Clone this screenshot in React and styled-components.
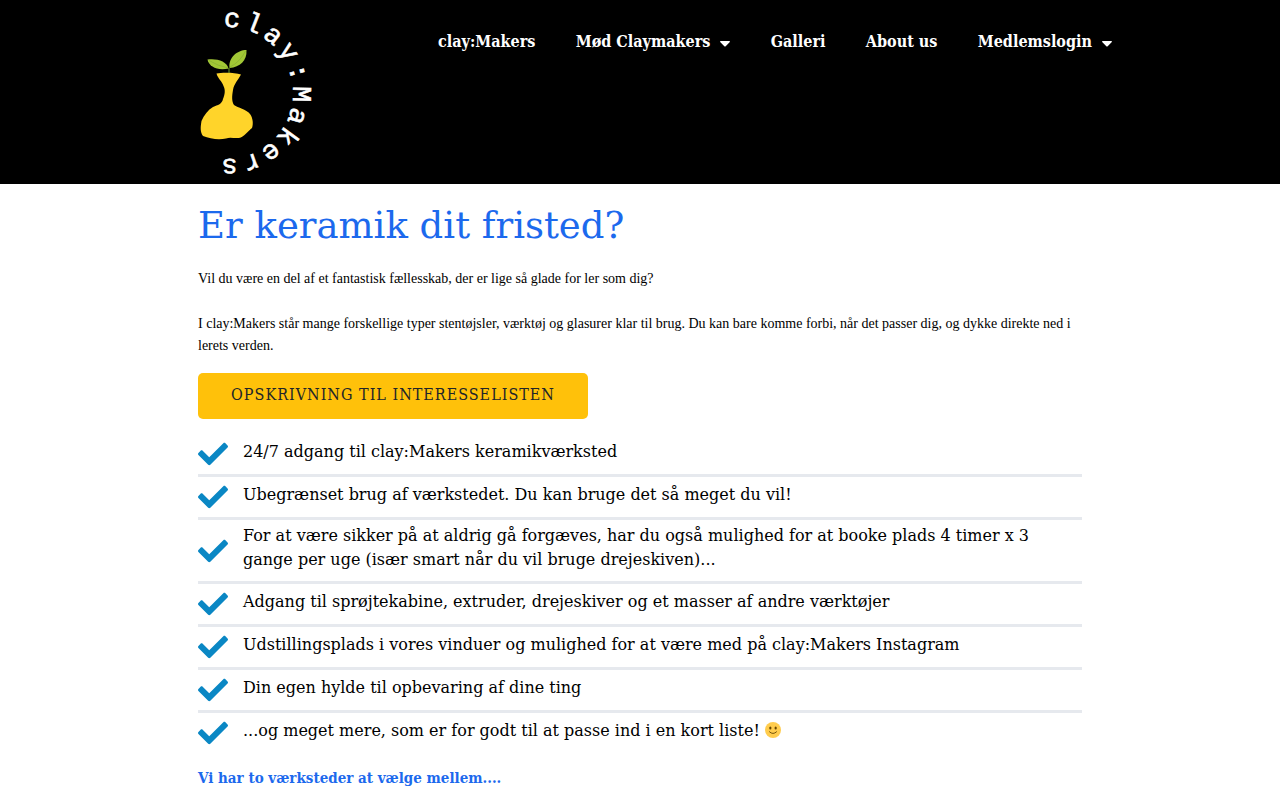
// App.jsx
import React from 'react';
import styled, { createGlobalStyle } from 'styled-components';

const typewriter = '"DejaVu Serif", serif';
const typewriterNarrow = '"DejaVu Serif Condensed", "DejaVu Serif", serif';

const menu = [
  { label: 'clay:Makers' },
  { label: 'Mød Claymakers', sub: true },
  { label: 'Galleri' },
  { label: 'About us' },
  { label: 'Medlemslogin', sub: true },
];

const benefits = [
  '24/7 adgang til clay:Makers keramikværksted',
  'Ubegrænset brug af værkstedet. Du kan bruge det så meget du vil!',
  'For at være sikker på at aldrig gå forgæves, har du også mulighed for at booke plads 4 timer x 3 gange per uge (især smart når du vil bruge drejeskiven)...',
  'Adgang til sprøjtekabine, extruder, drejeskiver og et masser af andre værktøjer',
  'Udstillingsplads i vores vinduer og mulighed for at være med på clay:Makers Instagram',
  'Din egen hylde til opbevaring af dine ting',
];

const Logo = () => (
  <LogoSvg viewBox="0 0 130 184" role="img" aria-label="clay:Makers">
    {/* letters run clockwise round half a circle */}
    {'clay:Makers'.split('').map((letter, i) => (
      <text key={i} x="37" y="27" textAnchor="middle" transform={`rotate(${4 + i * 17.4} 37 93)`}>
        {letter}
      </text>
    ))}
    <path
      fill="#ffd42a"
      d="M26.500 73.500C32 72.500 45 72.500 51 74.500C48 80 44 84 43 90C42 96 41.500 101 44 105C48 108 56 109 60 114C63 118 63.500 124 62 128C58 131 54 137 49 138C44 138.500 40 137 36 138.500C29 140 20 139 13 136C10 132 10.500 127 11.500 121C14 115 18 110 23 107C28 105 32 104 33 99C35 94 35.500 90 33.500 86C32 81 28 79 26.500 73.500Z"
    />
    <path fill="none" stroke="#6f9f2c" d="M39 73V68" />
    <path fill="#a2c736" d="M38.500 68.500C37 61 26 58 17.500 59.500C19 67 28 71 38.500 68.500Z" />
    <path fill="#a2c736" d="M39.500 68C38 58 47 50 56.500 50C57 61 50 67 39.500 68Z" />
    <path fill="none" stroke="#86ad30" strokeWidth="0.7" d="M19 60.500Q28 66 38 68M40 67Q50 62 55.500 51" />
  </LogoSvg>
);

const Check = () => (
  <CheckSvg viewBox="0 0 512 512" aria-hidden="true">
    <path d="M173.898 439.404l-166.4-166.4c-9.997-9.997-9.997-26.206 0-36.204l36.203-36.204c9.997-9.998 26.207-9.998 36.204 0L192 312.690 432.095 72.596c9.997-9.997 26.207-9.997 36.204 0l36.203 36.204c9.997 9.997 9.997 26.206 0 36.204l-294.400 294.401c-9.998 9.997-26.207 9.997-36.204-.001z" />
  </CheckSvg>
);

const Smiley = () => (
  <SmileySvg viewBox="0 0 36 36" role="img" aria-label="smiley">
    <circle fill="#ffcc4d" cx="18" cy="18" r="18" />
    <ellipse fill="#664500" cx="12" cy="13.500" rx="2.500" ry="3.500" />
    <ellipse fill="#664500" cx="24" cy="13.500" rx="2.500" ry="3.500" />
    <path fill="none" stroke="#664500" strokeWidth="2" strokeLinecap="round" d="M10 22Q18 30 26 22" />
  </SmileySvg>
);

const App = () => (
  <>
    <GlobalStyle />
    <Header>
      <HeaderInner>
        <LogoLink href="#">
          <Logo />
        </LogoLink>
        <Nav>
          {menu.map((item) => (
            <NavLink key={item.label} href="#">
              {item.label}
              {item.sub && (
                <Caret viewBox="0 0 10 6" aria-hidden="true">
                  <path d="M0.500 0H9.500Q10.300 0.500 9.600 1.200L5.700 5.200Q5 5.900 4.300 5.200L0.400 1.200Q-0.300 0.500 0.500 0Z" />
                </Caret>
              )}
            </NavLink>
          ))}
        </Nav>
      </HeaderInner>
    </Header>
    <Main>
      <Title>Er keramik dit fristed?</Title>
      <Intro>
        <p>Vil du være en del af et fantastisk fællesskab, der er lige så glade for ler som dig?</p>
        <p>
          I clay:Makers står mange forskellige typer stentøjsler, værktøj og glasurer klar til brug. Du kan bare
          komme forbi, når det passer dig, og dykke direkte ned i lerets verden.
        </p>
      </Intro>
      <SignUp type="button">Opskrivning til interesselisten</SignUp>
      <List>
        {benefits.map((text) => (
          <Item key={text}>
            <Check />
            <ItemText>{text}</ItemText>
          </Item>
        ))}
        <Item>
          <Check />
          <ItemText>
            ...og meget mere, som er for godt til at passe ind i en kort liste! <Smiley />
          </ItemText>
        </Item>
      </List>
      <SubTitle>Vi har to værksteder at vælge mellem....</SubTitle>
    </Main>
  </>
);

export default App;

const GlobalStyle = createGlobalStyle`
  * {
    box-sizing: border-box;
  }

  body {
    margin: 0;
    background: #fff;
    color: #000;
    font-family: "Liberation Serif", serif;
  }
`;

const Header = styled.header`
  background: #000;
`;

const HeaderInner = styled.div`
  display: flex;
  justify-content: space-between;
  align-items: flex-start;
  max-width: 944px;
  margin: 0 auto;
  padding-left: 22px;
`;

const LogoLink = styled.a`
  display: block;
`;

const LogoSvg = styled.svg`
  display: block;
  width: 130px;
  height: 184px;

  text {
    fill: #fff;
    stroke: #fff;
    stroke-width: 0.6;
    font-family: "Liberation Mono", monospace;
    font-size: 27px;
  }
`;

const Nav = styled.nav`
  display: flex;
  justify-content: space-between;
  width: 674px;
  padding-top: 30px;
`;

const NavLink = styled.a`
  display: flex;
  align-items: center;
  color: #fff;
  font-family: ${typewriterNarrow};
  font-size: 16px;
  font-weight: bold;
  line-height: 24px;
  white-space: nowrap;
  text-decoration: none;
`;

const Caret = styled.svg`
  width: 10px;
  height: 6px;
  margin-left: 10px;
  margin-top: 3px;
  fill: #fff;
`;

const Main = styled.main`
  max-width: 884px;
  margin: 0 auto;
  padding-top: 22px;
`;

const Title = styled.h1`
  margin: 0 0 22px;
  color: #1c69ed;
  font-family: ${typewriter};
  font-size: 37px;
  font-weight: normal;
  line-height: 40px;
`;

const Intro = styled.div`
  font-size: 14px;
  line-height: 22px;

  p {
    margin: 0 0 23px;
  }

  p:last-child {
    margin-bottom: 16px;
  }
`;

const SignUp = styled.button`
  display: block;
  min-width: 390px;
  height: 46px;
  padding: 0 30px 4px;
  border: none;
  border-radius: 5px;
  background: #ffc10a;
  color: #212529;
  font-family: ${typewriterNarrow};
  font-size: 16px;
  letter-spacing: 1px;
  text-transform: uppercase;
  cursor: pointer;
`;

const List = styled.ul`
  margin: 15px 0 0;
  padding: 0;
  list-style: none;
`;

const Item = styled.li`
  display: flex;
  align-items: center;
  gap: 15px;
  padding: 4px 20px 4px 0;
  border-bottom: 3px solid #e6e9ee;

  &:last-child {
    border-bottom: none;
  }
`;

const ItemText = styled.span`
  padding-bottom: 5px;
  font-family: ${typewriter};
  font-size: 16px;
  line-height: 24px;
`;

const CheckSvg = styled.svg`
  flex: none;
  width: 30px;
  height: 32px;
  fill: #0a87c4;
`;

const SmileySvg = styled.svg`
  width: 16px;
  height: 16px;
  vertical-align: -2px;
`;

const SubTitle = styled.h2`
  margin: 13px 0;
  color: #1c69ed;
  font-family: ${typewriterNarrow};
  font-size: 15px;
  font-weight: bold;
  line-height: 24px;
`;
